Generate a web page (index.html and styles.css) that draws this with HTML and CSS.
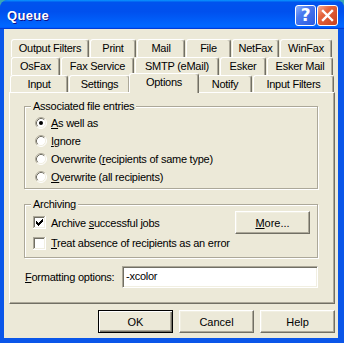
FILE: index.html
```html
<!DOCTYPE html>
<html lang="en">
<head>
  <meta charset="UTF-8" />
  <title>Queue</title>
  <link rel="stylesheet" href="styles.css">
</head>
<body>
  <div class="window">
    <div class="titlebar">
      <span class="title">Queue</span>
      <div class="tb-buttons">
        <span class="tb-btn help">?</span>
        <span class="tb-btn close">
          <svg width="13" height="13" viewBox="0 0 13 13"><path d="M2 2L11 11M11 2L2 11" stroke="#fff" stroke-width="2.4" stroke-linecap="square"/></svg>
        </span>
      </div>
    </div>

    <div class="client">
      <div class="tabctl">
        <div class="tabrow r1">
          <div class="tab">Output Filters</div>
          <div class="tab">Print</div>
          <div class="tab">Mail</div>
          <div class="tab">File</div>
          <div class="tab">NetFax</div>
          <div class="tab">WinFax</div>
        </div>
        <div class="tabrow r2">
          <div class="tab">OsFax</div>
          <div class="tab">Fax Service</div>
          <div class="tab">SMTP (eMail)</div>
          <div class="tab">Esker</div>
          <div class="tab">Esker Mail</div>
        </div>
        <div class="tabrow r3">
          <div class="tab">Input</div>
          <div class="tab">Settings</div>
          <div class="tab sel">Options</div>
          <div class="tab">Notify</div>
          <div class="tab">Input Filters</div>
        </div>

        <div class="panel">
          <div class="group g1">
            <span class="legend">Associated file entries</span>
            <div class="opt">
              <svg class="radio" viewBox="0 0 12 12"><use href="#radio"/><circle cx="6" cy="6" r="2" fill="#000"/></svg>
              <span><u>A</u>s well as</span>
            </div>
            <div class="opt">
              <svg class="radio" viewBox="0 0 12 12"><use href="#radio"/></svg>
              <span><u>I</u>gnore</span>
            </div>
            <div class="opt">
              <svg class="radio" viewBox="0 0 12 12"><use href="#radio"/></svg>
              <span>Overwrite (<u>r</u>ecipients of same type)</span>
            </div>
            <div class="opt">
              <svg class="radio" viewBox="0 0 12 12"><use href="#radio"/></svg>
              <span><u>O</u>verwrite (all recipients)</span>
            </div>
          </div>

          <div class="group g2">
            <span class="legend">Archiving</span>
            <div class="arch-row">
              <div class="opt">
                <svg class="check" viewBox="0 0 13 13"><use href="#checkbox"/><path d="M3 5h1v3h-1zM4 6h1v3h-1zM5 7h1v3h-1zM6 6h1v3h-1zM7 5h1v3h-1zM8 4h1v3h-1zM9 3h1v3h-1z" fill="#000"/></svg>
                <span>Archive <u>s</u>uccessful jobs</span>
              </div>
              <button class="btn"><u>M</u>ore...</button>
            </div>
            <div class="opt">
              <svg class="check" viewBox="0 0 13 13"><use href="#checkbox"/></svg>
              <span><u>T</u>reat absence of recipients as an error</span>
            </div>
          </div>

          <div class="fmt">
            <span><u>F</u>ormatting options:</span>
            <div class="input">-xcolor</div>
          </div>
        </div>
      </div>

      <div class="buttons">
        <button class="btn default">OK</button>
        <button class="btn">Cancel</button>
        <button class="btn">Help</button>
      </div>
    </div>
  </div>

  <svg width="0" height="0" class="defs">
    <defs>
      <g id="radio">
        <circle cx="6" cy="6" r="5" fill="#fff"/>
        <path d="M2.11 9.89A5.5 5.5 0 0 1 9.89 2.11" fill="none" stroke="#aca899"/>
        <path d="M9.89 2.11A5.5 5.5 0 0 1 2.11 9.89" fill="none" stroke="#fff"/>
        <path d="M2.82 9.18A4.5 4.5 0 0 1 9.18 2.82" fill="none" stroke="#716f64"/>
        <path d="M9.18 2.82A4.5 4.5 0 0 1 2.82 9.18" fill="none" stroke="#f1efe2"/>
      </g>
      <g id="checkbox">
        <rect x="0" y="0" width="13" height="13" fill="#fff"/>
        <rect x="0" y="0" width="12" height="1" fill="#aca899"/>
        <rect x="0" y="0" width="1" height="12" fill="#aca899"/>
        <rect x="1" y="1" width="10" height="1" fill="#716f64"/>
        <rect x="1" y="1" width="1" height="10" fill="#716f64"/>
        <rect x="1" y="11" width="11" height="1" fill="#f1efe2"/>
        <rect x="11" y="1" width="1" height="11" fill="#f1efe2"/>
      </g>
    </defs>
  </svg>
</body>
</html>
```

FILE: styles.css
```css
* {
  box-sizing: border-box;
}

body {
  margin: 0;
  background: #3aa6b4;
  font-family: "Liberation Sans", Arial, sans-serif;
  font-size: 11px;
  letter-spacing: -0.25px;
  color: #000;
}

.defs {
  position: absolute;
}

.window {
  width: 344px;
  height: 343px;
  background: #0a56e9;
  border-radius: 8px 8px 0 0;
  overflow: hidden;
  display: flex;
  flex-direction: column;
}

.titlebar {
  height: 29px;
  flex: none;
  display: flex;
  align-items: center;
  padding: 1px 6px 0 7px;
  background: linear-gradient(180deg, #0997ff, #0053ee 8%, #0050ee 40%, #0066ff 88%, #0066ff 93%, #005bff 95%, #003dd7 96%, #003dd7);
}

.title {
  flex: 1;
  font-weight: bold;
  font-size: 13px;
  letter-spacing: 0.3px;
  color: #fff;
  text-shadow: 1px 1px #0f1089;
}

.tb-buttons {
  display: flex;
  gap: 1px;
}

.tb-btn {
  width: 21px;
  height: 21px;
  border: 1px solid #fff;
  border-radius: 3px;
  display: flex;
  align-items: center;
  justify-content: center;
  color: #fff;
}

.help {
  background: linear-gradient(135deg, #8eb0fb 0%, #4a7af0 35%, #2a5ae0 100%);
  font: bold 17px "DejaVu Sans", sans-serif;
}

.close {
  background: linear-gradient(135deg, #f4ad94 0%, #e5643c 35%, #c8401e 100%);
}

.client {
  flex: 1;
  margin: 0 6px 5px 4px;
  background: #ece9d8;
  padding: 10px 3px 0 5px;
  display: flex;
  flex-direction: column;
}

.tabctl {
  width: 326px;
}

.tabrow {
  display: grid;
  height: 18px;
  column-gap: 1px;
  padding-left: 2px;
}

.r1 {
  grid-template-columns: 78px 46px 48px 45px 47px 52px;
}

.r2 {
  grid-template-columns: 49px 73px 84px 46px 66px;
}

.r3 {
  height: 17px;
  padding-left: 1px;
  grid-template-columns: 58px 61px 66px 54px 81px;
}

.tab {
  background: #ece9d8;
  border: 1px solid #fff;
  border-right-color: #716f64;
  border-bottom: 0;
  border-radius: 3px 3px 0 0;
  box-shadow: inset -1px 0 #aca899;
  text-align: center;
  line-height: 15px;
  padding-top: 1px;
  white-space: nowrap;
}

.tab.sel {
  margin: -2px -2px -1px;
  position: relative;
  z-index: 1;
}

.panel {
  height: 212px;
  border: 1px solid;
  border-color: #fff #716f64 #716f64 #fff;
  box-shadow: inset -1px -1px #aca899;
  padding: 13px 0 0 14px;
}

.group {
  position: relative;
  width: 294px;
  border: 1px solid #aca899;
  box-shadow: inset 1px 1px #fff, 1px 1px #fff;
}

.legend {
  position: absolute;
  top: -7px;
  left: 6px;
  padding: 0 2px;
  line-height: 13px;
  background: #ece9d8;
}

.g1 {
  height: 83px;
  padding: 7px 0 0 8px;
}

.g2 {
  height: 54px;
  margin-top: 15px;
  padding: 6px 7px 0 8px;
}

.opt {
  display: flex;
  align-items: center;
  height: 18px;
}

.radio {
  width: 12px;
  height: 12px;
  margin: 0 4px 0 2px;
}

.check {
  width: 13px;
  height: 13px;
  margin-right: 5px;
}

.arch-row {
  display: flex;
  align-items: center;
  justify-content: space-between;
  height: 23px;
}

.fmt {
  display: flex;
  align-items: center;
  justify-content: space-between;
  width: 294px;
  height: 22px;
  margin-top: 8px;
  padding-left: 1px;
}

.input {
  width: 196px;
  height: 22px;
  background: #fff;
  border: 1px solid;
  border-color: #aca899 #fff #fff #aca899;
  box-shadow: inset 1px 1px #716f64, inset -1px -1px #f1efe2;
  padding-left: 3px;
  line-height: 19px;
}

.buttons {
  display: flex;
  justify-content: flex-end;
  gap: 6px;
  margin-top: 6px;
}

.btn {
  width: 75px;
  height: 23px;
  padding: 0;
  font: inherit;
  color: #000;
  background: #ece9d8;
  border: 1px solid;
  border-color: #fff #716f64 #716f64 #fff;
  box-shadow: inset -1px -1px #aca899, inset 1px 1px #f1efe2;
}

.btn.default {
  border-color: #000;
  box-shadow: inset 1px 1px #fff, inset -1px -1px #716f64, inset -2px -2px #aca899;
}
```
